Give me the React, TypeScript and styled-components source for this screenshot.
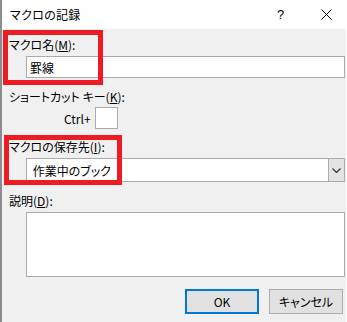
import React from "react";
import styled, { createGlobalStyle } from "styled-components";

const Global = createGlobalStyle`
  html, body { margin: 0; padding: 0; background: #ffffff; }
  body {
    font-family: "Noto Sans CJK JP", "Noto Sans", sans-serif;
    font-feature-settings: "palt";
    -webkit-font-smoothing: antialiased;
  }
`;

const Window = styled.div`
  position: relative;
  width: 346px;
  height: 322px;
  box-sizing: border-box;
  border-left: 2px solid #8c8c8c;
  background: #f0f0f0;
  display: flex;
  flex-direction: column;
  font-size: 12px;
  color: #000;
`;

const TitleBar = styled.div`
  height: 29px;
  background: #ffffff;
  display: flex;
  align-items: center;
  padding-left: 8px;
  padding-right: 14px;
`;

const Title = styled.div`
  flex: 1;
  font-size: 12px;
  line-height: 16px;
  letter-spacing: 0.3px;
`;

const HelpMark = styled.span`
  font-family: "Liberation Sans", sans-serif;
  font-size: 13px;
  width: 8px;
  margin-right: 36px;
  line-height: 16px;
`;

const CloseIcon = styled.svg`
  width: 11px;
  height: 11px;
  display: block;
`;

const Body = styled.div`
  display: flex;
  flex-direction: column;
  padding: 8px 1px 0 7px;
`;

const Label = styled.div<{ $top?: number }>`
  line-height: 16px;
  height: 16px;
  margin-top: ${(p) => p.$top ?? 0}px;
  white-space: nowrap;
`;

const Field = styled.div<{ $top: number; $height: number }>`
  margin-top: ${(p) => p.$top}px;
  margin-left: 17px;
  height: ${(p) => p.$height}px;
  box-sizing: border-box;
  background: #ffffff;
  border: 1px solid #ababab;
  display: flex;
  align-items: center;
  padding-left: 3px;
  font-size: 12px;
`;

const FieldText = styled.span`
  flex: 1;
`;

const ComboButton = styled.div`
  width: 17px;
  align-self: stretch;
  margin: -1px -1px -1px 0;
  box-sizing: border-box;
  background: #e3e3e3;
  border: 1px solid #ababab;
  display: flex;
  align-items: center;
  justify-content: center;
`;

const ShortcutRow = styled.div`
  display: flex;
  align-items: center;
  margin-top: 2px;
  padding-left: 55px;
  height: 22px;
`;

const KeyBox = styled.div`
  width: 23px;
  height: 22px;
  box-sizing: border-box;
  margin-left: 4px;
  background: #fff;
  border: 1px solid #ababab;
`;

const Buttons = styled.div`
  display: flex;
  justify-content: flex-end;
  gap: 10px;
  margin-top: 12px;
  padding-right: 2px;
`;

const Button = styled.button<{ $primary?: boolean }>`
  width: 74px;
  height: 25px;
  box-sizing: border-box;
  background: #e1e1e1;
  border: ${(p) => (p.$primary ? "2px solid #0078d7" : "1px solid #adadad")};
  font-family: inherit;
  font-feature-settings: "palt";
  font-size: 12px;
  color: #000;
  padding: 0;
`;

const Highlight = styled.div<{ $x: number; $y: number; $w: number; $h: number }>`
  position: absolute;
  left: ${(p) => p.$x}px;
  top: ${(p) => p.$y}px;
  width: ${(p) => p.$w}px;
  height: ${(p) => p.$h}px;
  box-sizing: border-box;
  border: 5px solid #ed1c24;
  pointer-events: none;
`;

export default function App() {
  return (
    <>
      <Global />
      <Window>
        <TitleBar>
          <Title>マクロの記録</Title>
          <HelpMark>?</HelpMark>
          <CloseIcon viewBox="0 0 11 11">
            <path d="M0.5 0.5 L10.5 10.5 M10.5 0.5 L0.5 10.5" stroke="#000" strokeWidth="1" fill="none" />
          </CloseIcon>
        </TitleBar>
        <Body>
          <Label>
            マクロ名(<u>M</u>):
          </Label>
          <Field $top={3} $height={22}>
            <FieldText>罫線</FieldText>
          </Field>
          <Label $top={11}>
            ショートカット キー(<u>K</u>):
          </Label>
          <ShortcutRow>
            Ctrl+
            <KeyBox />
          </ShortcutRow>
          <Label $top={10}>
            マクロの保存先(<u>I</u>):
          </Label>
          <Field $top={3} $height={24}>
            <FieldText>&nbsp;作業中のブック</FieldText>
            <ComboButton>
              <svg width="9" height="5" viewBox="0 0 9 5">
                <polyline points="0.5,0.5 4.5,4.5 8.5,0.5" stroke="#333" strokeWidth="1.2" fill="none" />
              </svg>
            </ComboButton>
          </Field>
          <Label $top={11}>
            説明(<u>D</u>):
          </Label>
          <Field $top={3} $height={65} />
          <Buttons>
            <Button $primary>OK</Button>
            <Button>キャンセル</Button>
          </Buttons>
        </Body>
        <Highlight $x={1} $y={30} $w={100} $h={55} />
        <Highlight $x={2} $y={135} $w={118} $h={50} />
      </Window>
    </>
  );
}
